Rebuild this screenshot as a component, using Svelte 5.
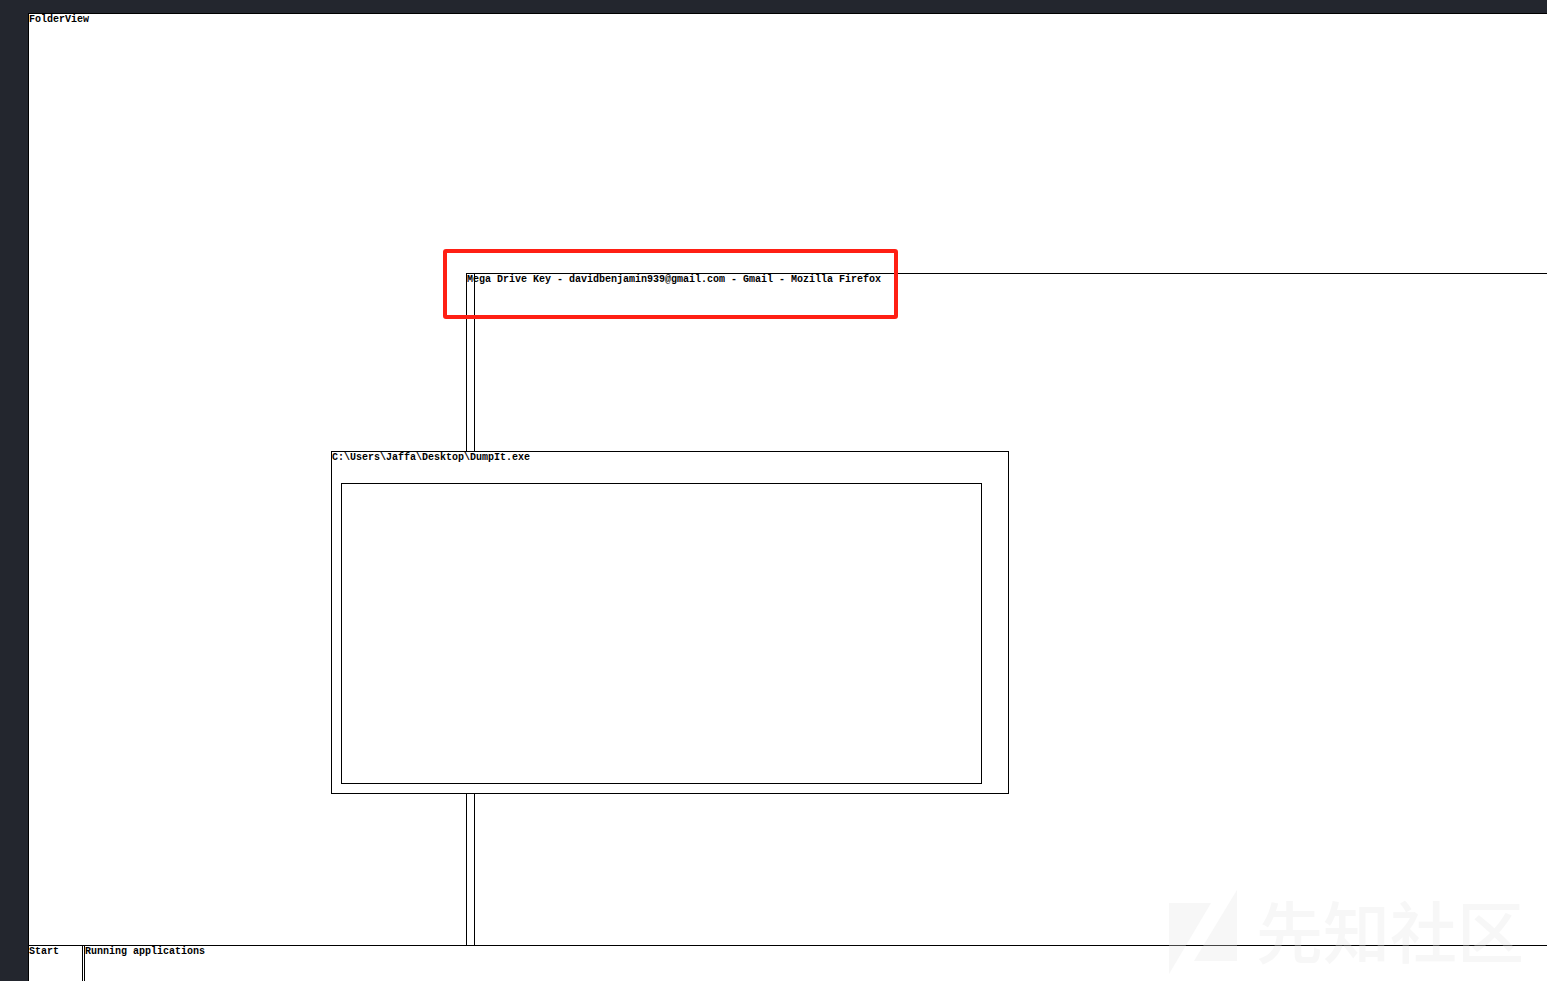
<script>
  const folder = 'FolderView';
  const browser = 'Mega Drive Key - davidbenjamin939@gmail.com - Gmail - Mozilla Firefox';
  const consoleTitle = 'C:\\Users\\Jaffa\\Desktop\\DumpIt.exe';
</script>

<main class="page">
  <div class="screen">
    <section class="desktop">
      <h1 class="title">{folder}</h1>

      <section class="window browser">
        <div class="browser-body"></div>
        <h2 class="title browser-title">{browser}</h2>
      </section>

      <section class="window console">
        <h2 class="title console-title">{consoleTitle}</h2>
        <div class="console-body"></div>
      </section>

      <div class="highlight"></div>
    </section>

    <footer class="taskbar">
      <div class="title start">Start</div>
      <div class="title running">Running applications</div>
    </footer>
  </div>

  <div class="watermark">
    <svg class="logo" viewBox="0 0 68 84" aria-hidden="true">
      <path d="M0 13H42L0 84Z M68 0V71H25Z" fill="currentColor" />
    </svg>
    <span>先知社区</span>
  </div>
</main>

<style>
  :global(body) {
    margin: 0;
    background: #23262e;
  }

  .page {
    position: relative;
    box-sizing: border-box;
    display: flex;
    min-height: 100vh;
    padding: 13px 0 0 28px;
    overflow: hidden;
    background: #23262e;
    color: #000;
    font-family: "Liberation Mono", monospace;
  }

  .screen {
    flex: 1;
    display: flex;
    flex-direction: column;
    border: solid #000;
    border-width: 1px 0 0 1px;
    background: #fff;
  }

  .title {
    margin: 0;
    font-size: 10px;
    line-height: 11px;
    font-weight: 700;
    white-space: nowrap;
  }

  .desktop {
    position: relative;
    flex: 1;
    min-height: 800px;
    overflow: hidden;
  }

  .window {
    position: absolute;
    box-sizing: border-box;
    border: 1px solid #000;
    background: #fff;
  }

  .browser {
    display: flex;
    top: 259px;
    right: 0;
    bottom: 0;
    left: 437px;
    border-width: 1px 0 0 1px;
  }

  .browser-body {
    flex: 1;
    margin-left: 7px;
    border-left: 1px solid #000;
  }

  .browser-title {
    position: absolute;
    top: 0;
    left: 0;
  }

  .console {
    display: flex;
    flex-direction: column;
    top: 437px;
    left: 302px;
    width: 678px;
    height: 343px;
    padding: 0 26px 9px 9px;
  }

  .console-title {
    height: 31px;
    margin-left: -9px;
  }

  .console-body {
    flex: 1;
    border: 1px solid #000;
  }

  .highlight {
    position: absolute;
    box-sizing: border-box;
    top: 235px;
    left: 414px;
    width: 455px;
    height: 70px;
    border: 4px solid #ff1f14;
    border-radius: 3px;
  }

  .taskbar {
    display: flex;
    height: 35px;
    border-top: 1px solid #000;
  }

  .start {
    width: 53px;
    border-right: 1px solid #000;
  }

  .running {
    flex: 1;
    margin-left: 1px;
    border-left: 1px solid #000;
  }

  .watermark {
    position: absolute;
    right: 23px;
    bottom: 7px;
    display: flex;
    align-items: flex-start;
    gap: 19px;
    color: #e6e6e6;
    opacity: 0.3;
    font-family: "Noto Sans CJK SC", sans-serif;
    font-size: 67px;
    line-height: 78px;
    font-weight: 500;
  }

  .logo {
    width: 68px;
    height: 84px;
  }
</style>
